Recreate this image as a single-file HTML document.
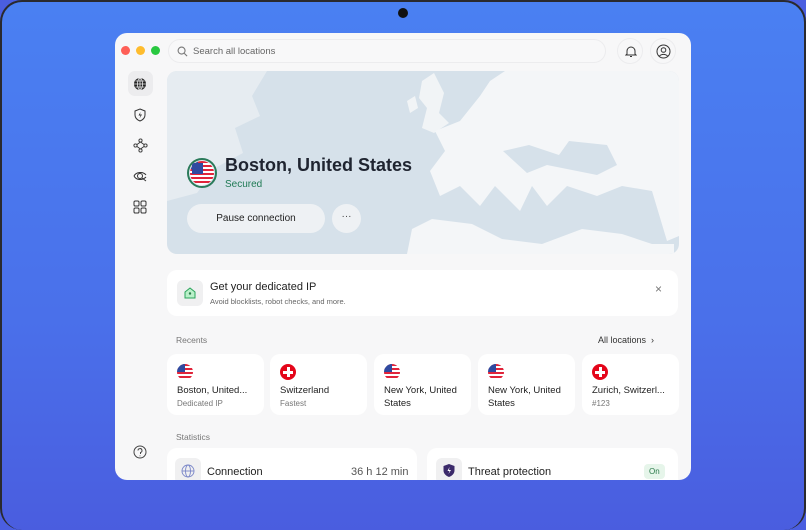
<!DOCTYPE html>
<html><head><meta charset="utf-8"><style>
*{box-sizing:border-box;margin:0;padding:0}
body{width:806px;height:499px;overflow:hidden;background:#4a5ee0;font-family:"Liberation Sans",sans-serif;position:relative}
.screen{position:absolute;left:0;top:0;width:806px;height:530px;border-radius:22px;border:2px solid #2a2a2e;border-bottom:none;background:linear-gradient(180deg,#4a80f2 0%,#4a70ea 60%,#4a5ddf 100%)}
.cam{position:absolute;left:398px;top:8px;width:10px;height:10px;border-radius:50%;background:#111}
.win{position:absolute;left:115px;top:33px;width:576px;height:447px;background:#f7f7f8;border-radius:12px;overflow:hidden}
.dot{position:absolute;top:13px;width:9px;height:9px;border-radius:50%}
.search{position:absolute;left:53px;top:6px;width:438px;height:24px;border:1px solid #ececee;border-radius:12px;background:#f8f8f9;font-size:9.5px;color:#666;padding:6px 0 0 24px}
.ib{position:absolute;top:5px;width:26px;height:26px;border-radius:50%;border:1px solid #ececee}
.side svg{position:absolute;left:18px}
.map{position:absolute;left:52px;top:38px;width:512px;height:183px;border-radius:10px;overflow:hidden;background:#d6e1ea}
.card{position:absolute;background:#fff;border-radius:10px}
.t{position:absolute;white-space:nowrap}
.rc{top:321px;width:97px;height:61px}
.rc .n{left:10px;top:30px;font-size:9.5px;color:#222;line-height:13px;white-space:normal;width:85px}
.rc .s{font-size:8px;color:#777}
.flag{position:absolute;left:10px;top:10px;width:16px;height:16px;border-radius:50%;overflow:hidden}
.us{background:repeating-linear-gradient(180deg,#e0243a 0 2px,#fff 2px 4px)}
.us:after{content:"";position:absolute;left:0;top:0;width:8px;height:8px;background:#2f4aa0}
.ch{background:#e4061a}
.ch:before{content:"";position:absolute;left:7px;top:3px;width:3px;height:10px;background:#fff}
.ch:after{content:"";position:absolute;left:3px;top:7px;width:10px;height:3px;background:#fff}
</style></head><body>
<div class="screen"></div><div class="cam"></div>
<div class="win">
<div class="dot" style="left:6px;background:#fe5f57"></div>
<div class="dot" style="left:21px;background:#febc2e"></div>
<div class="dot" style="left:36px;background:#28c840"></div>
<div class="search"><svg style="position:absolute;left:8px;top:6px" width="11" height="11" viewBox="0 0 12 12"><circle cx="5" cy="5" r="3.8" fill="none" stroke="#777" stroke-width="1.2"/><path d="M8 8l3 3" stroke="#777" stroke-width="1.2"/></svg>Search all locations</div>
<div class="ib" style="left:502px"><svg style="position:absolute;left:7px;top:6px" width="12" height="13" viewBox="0 0 12 13"><path d="M2 9V6a4 4 0 0 1 8 0v3l1 1H1z M5 11.5h2" fill="none" stroke="#333" stroke-width="1"/></svg></div>
<div class="ib" style="left:535px"><svg style="position:absolute;left:5px;top:5px" width="15" height="15" viewBox="0 0 15 15"><circle cx="7.5" cy="7.5" r="6.5" fill="none" stroke="#333" stroke-width="1"/><circle cx="7.5" cy="6" r="2.3" fill="none" stroke="#333"/><path d="M3.5 12a5 4 0 0 1 8 0" fill="none" stroke="#333"/></svg></div>
<div class="side">
<div style="position:absolute;left:13px;top:38px;width:25px;height:25px;border-radius:7px;background:#ececee"></div>
<svg style="top:44px" width="14" height="14" viewBox="0 0 14 14"><circle cx="7" cy="7" r="6" fill="#222"/><path d="M1 7h12M7 1v12M2.5 4h9M2.5 10h9" stroke="#ececee" stroke-width=".8"/><ellipse cx="7" cy="7" rx="2.5" ry="6" fill="none" stroke="#ececee" stroke-width=".8"/></svg>
<svg style="top:75px" width="14" height="14" viewBox="0 0 14 14"><path d="M7 1l5 2v4c0 3-2.5 5-5 6-2.5-1-5-3-5-6V3z" fill="none" stroke="#333"/><path d="M7.5 4L5.5 7.5h2l-1 3 2.5-4h-2z" fill="#333"/></svg>
<svg style="top:105px" width="15" height="15" viewBox="0 0 15 15" fill="none" stroke="#333" stroke-width=".9"><circle cx="7.5" cy="2.5" r="1.6"/><circle cx="7.5" cy="12.5" r="1.6"/><circle cx="2.5" cy="7.5" r="1.6"/><circle cx="12.5" cy="7.5" r="1.6"/><path d="M7.5 4L11 6.5M7.5 4L4 6.5M4 8.5L7.5 11M11 8.5L7.5 11"/></svg>
<svg style="top:136px" width="15" height="14" viewBox="0 0 15 14" fill="none" stroke="#333"><path d="M1 7c2-4 9-5 12-1M1 7c2 4 8 5 12 1"/><circle cx="7" cy="7" r="2.5"/><path d="M9 9l4 3"/></svg>
<svg style="top:167px" width="14" height="14" viewBox="0 0 14 14" fill="none" stroke="#333"><rect x="1" y="1" width="5" height="5" rx="1.3"/><rect x="8" y="1" width="5" height="5" rx="1.3"/><rect x="1" y="8" width="5" height="5" rx="1.3"/><rect x="8" y="8" width="5" height="5" rx="1.3"/></svg>
<svg style="top:412px" width="14" height="14" viewBox="0 0 14 14" fill="none" stroke="#444"><circle cx="7" cy="7" r="6"/><path d="M5 5.5a2 2 0 1 1 2.5 2V9M7 10.5v.8"/></svg>
</div>
<div class="map"><svg width="512" height="183" viewBox="0 0 512 183">
<path d="M0 0h100l-15 25 8 20-25 12 8 25-28 15-18 25-30 8z" fill="#e6ecf1"/>
<path d="M255 10l12-8 10 20-5 20 10 10-15 10-12-5 5-20-8-10z" fill="#f1f4f6"/>
<path d="M240 30l8-5 3 12-8 5z" fill="#f1f4f6"/>
<path d="M305 0h207v165l-12 5-15-50-30-5-25 10-30-10-20 20-15-20-12 25-25-25-15 20-20-20-20 10-10-25 15-20-10-20 25-10 20-25 10-15 15-10z" fill="#f4f6f8"/>
<path d="M336 80l26-6 30 10 10-14 38 4 10 20-20 10-50-10-20 8z" fill="#d6e1ea"/>
<path d="M240 183l5-25 20-10 40 5 30 15 40 5 40-15 40 5 30 10 22 0v10z" fill="#f4f6f8"/>
</svg></div>
<div class="t" style="left:72px;top:125px;width:30px;height:30px;border-radius:50%;border:2px solid #2a7a5a;overflow:hidden"><div class="us" style="position:absolute;inset:1px;border-radius:50%;overflow:hidden"></div><div style="position:absolute;left:3px;top:3px;width:11px;height:11px;background:#2f4aa0"></div></div>
<div class="t" style="left:110px;top:122px;font-size:18px;font-weight:bold;color:#1f2430">Boston, United States</div>
<div class="t" style="left:110px;top:146px;font-size:10px;color:#1f7a55">Secured</div>
<div class="t" style="left:72px;top:171px;width:138px;height:29px;border-radius:15px;background:#eef1f4;font-size:10px;color:#222;text-align:center;line-height:29px">Pause connection</div>
<div class="t" style="left:217px;top:171px;width:29px;height:29px;border-radius:50%;background:#eef1f4;font-size:10px;color:#444;text-align:center;line-height:26px">···</div>
<div class="card" style="left:52px;top:237px;width:511px;height:46px">
<div class="t" style="left:10px;top:10px;width:26px;height:26px;border-radius:6px;background:#f0f0f1"><svg style="position:absolute;left:6px;top:6px" width="14" height="14" viewBox="0 0 14 14"><path d="M2 6l5-4 5 4v6H2z" fill="#b9f0c9" stroke="#2aa35a"/><circle cx="7" cy="7.5" r="1.2" fill="#2a7a4a"/></svg></div>
<div class="t" style="left:43px;top:11px;font-size:11px;color:#222">Get your dedicated IP</div>
<div class="t" style="left:43px;top:27px;font-size:7.5px;color:#666">Avoid blocklists, robot checks, and more.</div>
<div class="t" style="left:488px;top:12px;font-size:12px;color:#777">×</div>
</div>
<div class="t" style="left:61px;top:302px;font-size:8.5px;color:#777">Recents</div>
<div class="t" style="left:483px;top:302px;font-size:9px;color:#333">All locations &nbsp;›</div>
<div class="card rc" style="left:52px"><div class="flag us"></div><div class="t n">Boston, United...<br><span class="s">Dedicated IP</span></div></div>
<div class="card rc" style="left:155px"><div class="flag ch"></div><div class="t n">Switzerland<br><span class="s">Fastest</span></div></div>
<div class="card rc" style="left:259px"><div class="flag us"></div><div class="t n">New York, United States</div></div>
<div class="card rc" style="left:363px"><div class="flag us"></div><div class="t n">New York, United States</div></div>
<div class="card rc" style="left:467px"><div class="flag ch"></div><div class="t n">Zurich, Switzerl...<br><span class="s">#123</span></div></div>
<div class="t" style="left:61px;top:399px;font-size:8.5px;color:#777">Statistics</div>
<div class="card" style="left:52px;top:415px;width:250px;height:50px">
<div class="t" style="left:8px;top:10px;width:26px;height:26px;border-radius:6px;background:#f0f0f1"><svg style="position:absolute;left:6px;top:6px" width="14" height="14" viewBox="0 0 14 14" fill="none" stroke="#7a86c8" stroke-width=".9"><circle cx="7" cy="7" r="6"/><ellipse cx="7" cy="7" rx="2.5" ry="6"/><path d="M1 7h12"/></svg></div>
<div class="t" style="left:40px;top:18px;font-size:11px;color:#222">Connection</div>
<div class="t" style="left:184px;top:18px;font-size:11px;color:#555">36 h 12 min</div></div>
<div class="card" style="left:312px;top:415px;width:251px;height:50px">
<div class="t" style="left:9px;top:10px;width:26px;height:26px;border-radius:6px;background:#f0f0f1"><svg style="position:absolute;left:6px;top:5px" width="14" height="15" viewBox="0 0 14 15"><path d="M7 1l5.5 2v4.5c0 3-2.5 5.5-5.5 6.5-3-1-5.5-3.5-5.5-6.5V3z" fill="#3b2a6a"/><path d="M7.5 4L5.5 8h2l-1 3 2.5-4h-2z" fill="#fff"/></svg></div>
<div class="t" style="left:41px;top:18px;font-size:11px;color:#222">Threat protection</div>
<div class="t" style="left:217px;top:16px;font-size:8px;color:#2a7a4a;background:#e6f5ea;padding:3px 5px;border-radius:4px">On</div></div>
</div>
</body></html>
